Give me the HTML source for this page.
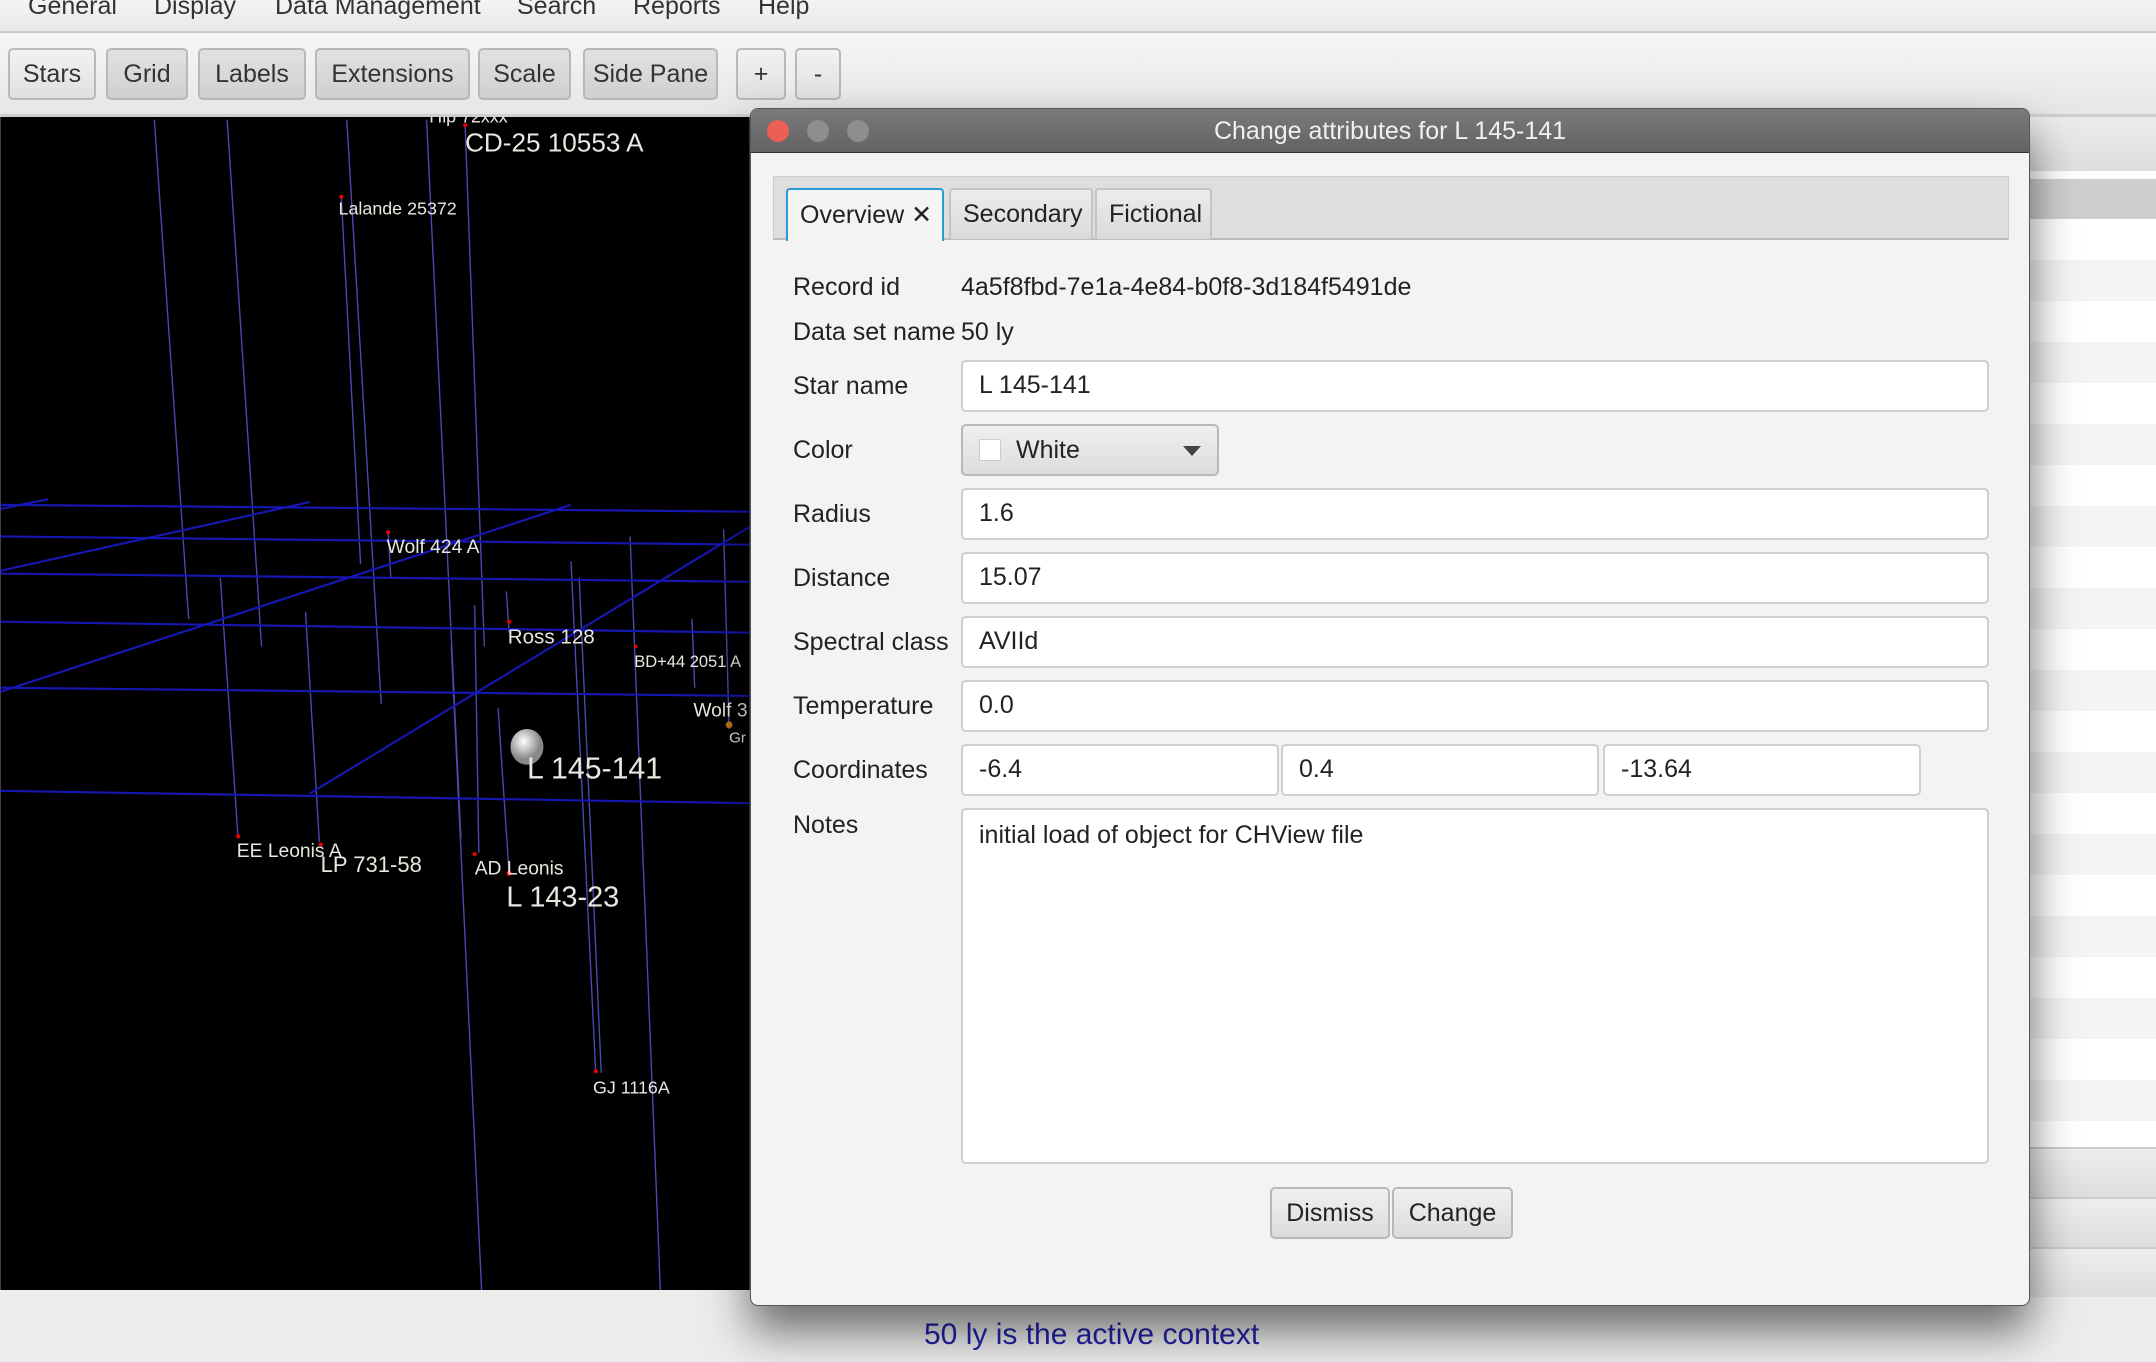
<!DOCTYPE html>
<html><head><meta charset="utf-8"><style>
*{box-sizing:border-box;margin:0;padding:0}
body{width:2156px;height:1362px;overflow:hidden;background:#ececec;font-family:"Liberation Sans",sans-serif;position:relative;color:#222}
.abs{position:absolute}
.menu{left:0;top:0;width:2156px;height:33px;background:linear-gradient(#f4f4f4,#e8e8e8);border-bottom:2px solid #c8c8c8}
.menu span{position:absolute;top:-8px;font-size:25px;color:#333}
.tool{left:0;top:33px;width:2156px;height:84px;background:linear-gradient(#f6f6f6,#e6e6e6);border-bottom:3px solid #cfcfcf}
.tb{position:absolute;top:15px;height:52px;border:2px solid #b8b8b8;border-radius:5px;background:linear-gradient(#e2e2e2,#cfcfcf);font-size:25px;color:#333;text-align:center;line-height:48px}
.tb.l{background:linear-gradient(#f2f2f2,#e0e0e0)}
.right{left:2030px;top:117px;width:126px;height:1173px;background:#fff}
.dlg{left:750px;top:108px;width:1280px;height:1198px;background:#f3f3f3;border:1px solid #555;border-radius:8px;box-shadow:0 25px 45px rgba(0,0,0,.55);overflow:hidden}
.title{left:0;top:0;width:100%;height:44px;background:linear-gradient(#7a7a7a,#636363);border-bottom:1px solid #333;color:#f0f0f0;font-size:25px;text-align:center;line-height:44px}
.dot{position:absolute;top:11px;width:22px;height:22px;border-radius:50%;background:#8e8e8e}
.lbl{position:absolute;left:42px;font-size:25px;color:#222}
.fld{position:absolute;left:210px;height:52px;background:#fff;border:2px solid #cfcfcf;border-radius:5px;font-size:25px;line-height:46px;padding-left:16px;color:#222}
.btn{position:absolute;height:52px;border:2px solid #b8b8b8;border-radius:5px;background:linear-gradient(#f0f0f0,#dcdcdc);font-size:25px;text-align:center;line-height:48px;color:#222}
</style></head><body>
<div class="abs menu">
<span style="left:28px">General</span><span style="left:154px">Display</span><span style="left:275px">Data Management</span><span style="left:517px">Search</span><span style="left:633px">Reports</span><span style="left:758px">Help</span>
</div>
<div class="abs tool">
<div class="tb l" style="left:8px;width:88px">Stars</div>
<div class="tb" style="left:106px;width:82px">Grid</div>
<div class="tb" style="left:198px;width:108px">Labels</div>
<div class="tb" style="left:315px;width:155px">Extensions</div>
<div class="tb" style="left:478px;width:93px">Scale</div>
<div class="tb" style="left:583px;width:135px">Side Pane</div>
<div class="tb l" style="left:736px;width:50px">+</div>
<div class="tb l" style="left:795px;width:46px">-</div>
</div>
<div class="abs right">
<div style="height:54px;background:linear-gradient(#ececec,#dedede)"></div>
<div style="height:8px;background:#fff"></div>
<div style="height:40px;background:#cfcfcf"></div>
<div style="height:928px;background:repeating-linear-gradient(#fff 0 41px,#f4f4f4 41px 82px)"></div>
<div style="height:50px;background:linear-gradient(#eee,#ddd);border-top:2px solid #ccc"></div>
<div style="height:50px;background:linear-gradient(#eee,#ddd);border-top:2px solid #ccc"></div>
<div style="height:50px;background:linear-gradient(#eee,#ddd);border-top:2px solid #ccc"></div>
</div>
<svg class="abs" style="left:0;top:117px" width="750" height="1173" viewBox="0 85 545 853">
<rect x="0" y="85" width="545" height="853" fill="#000"/>
<g stroke="#4a4ab0" stroke-width="1">
<line x1="112" y1="87" x2="137" y2="450"/><line x1="165" y1="87" x2="190" y2="470"/><line x1="252" y1="87" x2="277" y2="512"/>
<line x1="248" y1="143" x2="262" y2="410"/><line x1="310" y1="87" x2="335" y2="610"/><line x1="338" y1="90" x2="352" y2="470"/>
<line x1="222" y1="445" x2="232" y2="612"/><line x1="160" y1="420" x2="173" y2="610"/><line x1="328" y1="470" x2="350" y2="938"/>
<line x1="362" y1="515" x2="370" y2="635"/><line x1="368" y1="430" x2="370" y2="460"/><line x1="415" y1="408" x2="433" y2="780"/>
<line x1="421" y1="420" x2="437" y2="780"/><line x1="458" y1="390" x2="480" y2="938"/><line x1="503" y1="450" x2="505" y2="500"/>
<line x1="526" y1="385" x2="530" y2="530"/><line x1="282" y1="385" x2="284" y2="420"/><line x1="345" y1="440" x2="348" y2="620"/>
</g>
<g stroke="#1616b0" stroke-width="1.6">
<line x1="0" y1="367" x2="545" y2="372"/><line x1="0" y1="390" x2="545" y2="396"/><line x1="0" y1="417" x2="545" y2="423"/>
<line x1="0" y1="452" x2="545" y2="460"/><line x1="0" y1="500" x2="545" y2="506"/><line x1="0" y1="575" x2="545" y2="584"/>
<line x1="0" y1="415" x2="225" y2="365"/><line x1="0" y1="503" x2="415" y2="367"/><line x1="225" y1="577" x2="545" y2="383"/>
<line x1="0" y1="370" x2="35" y2="363"/>
</g>
<g fill="#e00"><circle cx="338" cy="91" r="1.5"/><circle cx="248" cy="143" r="1.5"/><circle cx="282" cy="387" r="1.5"/><circle cx="370" cy="452" r="1.5"/><circle cx="462" cy="470" r="1.3"/><circle cx="173" cy="608" r="1.5"/><circle cx="233" cy="614" r="1.5"/><circle cx="345" cy="621" r="1.5"/><circle cx="370" cy="635" r="2"/><circle cx="433" cy="779" r="1.5"/></g>
<circle cx="530" cy="527" r="2.5" fill="#c07020"/>
<defs><radialGradient id="g" cx=".4" cy=".35"><stop offset="0" stop-color="#fff"/><stop offset="1" stop-color="#888"/></radialGradient></defs>
<ellipse cx="383" cy="543" rx="12" ry="13" fill="url(#g)"/>
<g fill="#e8e8e0" font-family="Liberation Sans,sans-serif">
<text x="338" y="110" font-size="19">CD-25 10553 A</text><text x="312" y="89" font-size="13">Hip 72xxx</text>
<text x="246" y="156" font-size="13">Lalande 25372</text><text x="281" y="402" font-size="14">Wolf  424 A</text>
<text x="369" y="468" font-size="15">Ross 128</text><text x="461" y="485" font-size="12">BD+44  2051 A</text>
<text x="504" y="521" font-size="14">Wolf 3</text><text x="530" y="540" font-size="11">Gr</text>
<text x="383" y="566" font-size="22">L 145-141</text><text x="172" y="623" font-size="14">EE Leonis A</text>
<text x="233" y="634" font-size="16">LP 731-58</text><text x="345" y="636" font-size="14">AD Leonis</text>
<text x="368" y="659" font-size="21">L 143-23</text><text x="431" y="795" font-size="13">GJ 1116A</text>
</g>
</svg>
<div class="abs" style="left:924px;top:1318px;font-size:30px;color:#2222aa">50 ly is the active context</div>
<div class="abs dlg">
<div class="abs title">Change attributes for L 145-141
<div class="dot" style="left:16px;background:#ec5f57"></div><div class="dot" style="left:56px"></div><div class="dot" style="left:96px"></div></div>
<div class="abs" style="left:22px;top:67px;width:1236px;height:64px;background:#dedede;border:1px solid #ccc;border-bottom:2px solid #bbb"></div>
<div class="abs" style="left:35px;top:79px;width:158px;height:53px;background:#f4f4f4;border:2px solid #2a9bd8;border-bottom:none;border-radius:4px 4px 0 0;font-size:25px;line-height:50px;padding-left:12px">Overview ✕</div>
<div class="abs" style="left:198px;top:79px;width:144px;height:51px;background:linear-gradient(#ececec,#dadada);border:2px solid #c4c4c4;border-bottom:none;border-radius:4px 4px 0 0;font-size:25px;line-height:48px;padding-left:12px">Secondary</div>
<div class="abs" style="left:344px;top:79px;width:117px;height:51px;background:linear-gradient(#ececec,#dadada);border:2px solid #c4c4c4;border-bottom:none;border-radius:4px 4px 0 0;font-size:25px;line-height:48px;padding-left:12px">Fictional</div>
<div class="lbl" style="top:164px">Record id</div><div class="lbl" style="top:164px;left:210px">4a5f8fbd-7e1a-4e84-b0f8-3d184f5491de</div>
<div class="lbl" style="top:209px">Data set name</div><div class="lbl" style="top:209px;left:210px">50 ly</div>
<div class="lbl" style="top:263px">Star name</div><div class="fld" style="top:251px;width:1028px">L 145-141</div>
<div class="lbl" style="top:327px">Color</div>
<div class="btn" style="left:210px;top:315px;width:258px;text-align:left;padding-left:53px">White
<div style="position:absolute;left:16px;top:13px;width:22px;height:22px;background:#fff;border:1px solid #ccc"></div>
<div style="position:absolute;right:16px;top:20px;border-left:9px solid transparent;border-right:9px solid transparent;border-top:10px solid #444"></div></div>
<div class="lbl" style="top:391px">Radius</div><div class="fld" style="top:379px;width:1028px">1.6</div>
<div class="lbl" style="top:455px">Distance</div><div class="fld" style="top:443px;width:1028px">15.07</div>
<div class="lbl" style="top:519px">Spectral class</div><div class="fld" style="top:507px;width:1028px">AVIId</div>
<div class="lbl" style="top:583px">Temperature</div><div class="fld" style="top:571px;width:1028px">0.0</div>
<div class="lbl" style="top:647px">Coordinates</div>
<div class="fld" style="top:635px;width:318px">-6.4</div><div class="fld" style="top:635px;left:530px;width:318px">0.4</div><div class="fld" style="top:635px;left:852px;width:318px">-13.64</div>
<div class="lbl" style="top:702px">Notes</div>
<div class="fld" style="top:699px;width:1028px;height:356px;line-height:34px;padding-top:8px">initial load of object for CHView file</div>
<div class="btn" style="left:519px;top:1078px;width:120px">Dismiss</div>
<div class="btn" style="left:641px;top:1078px;width:121px">Change</div>
</div>
</body></html>
